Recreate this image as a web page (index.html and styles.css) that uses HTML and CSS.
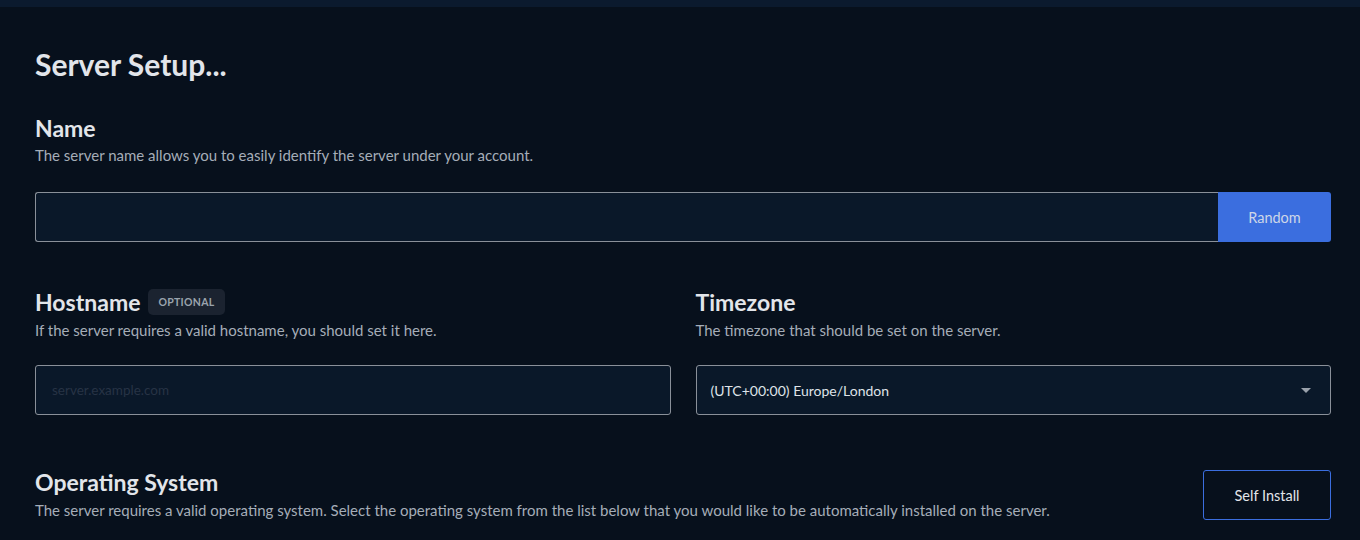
FILE: index.html
```html
<!DOCTYPE html>
<html>
<head>
<meta charset="utf-8">
<link rel="stylesheet" href="styles.css">
</head>
<body>
<div class="topbar"></div>
<main class="page">
  <h1 class="title">Server Setup...</h1>

  <section class="field name-field">
    <h2 class="label">Name</h2>
    <p class="desc">The server name allows you to easily identify the server under your account.</p>
    <div class="input-group">
      <input class="input grow" type="text">
      <button class="btn-primary">Random</button>
    </div>
  </section>

  <div class="two-col">
    <section class="field">
      <h2 class="label">Hostname <span class="badge">OPTIONAL</span></h2>
      <p class="desc">If the server requires a valid hostname, you should set it here.</p>
      <input class="input" type="text" placeholder="server.example.com">
    </section>
    <section class="field">
      <h2 class="label">Timezone</h2>
      <p class="desc">The timezone that should be set on the server.</p>
      <div class="select">
        <span>(UTC+00:00) Europe/London</span>
        <span class="caret"></span>
      </div>
    </section>
  </div>

  <section class="os-row">
    <div>
      <h2 class="label">Operating System</h2>
      <p class="desc">The server requires a valid operating system. Select the operating system from the list below that you would like to be automatically installed on the server.</p>
    </div>
    <button class="btn-outline">Self Install</button>
  </section>
</main>
</body>
</html>
```
FILE: styles.css
```css
* { box-sizing: border-box; }
html, body { margin: 0; padding: 0; }
body {
  background: #07101c;
  color: #e2e5ea;
  font-family: "Lato", "Noto Sans", sans-serif;
  height: 540px;
  overflow: hidden;
}
.topbar {
  height: 7px;
  background: #0b1a2e;
}
.page {
  padding: 0 29px 0 35px;
}
.title {
  margin: 0;
  padding-top: 39px;
  font-size: 30px;
  line-height: 36px;
  font-weight: 700;
  color: #e2e5ea;
}
.name-field { margin-top: 32px; }
.label {
  margin: 0;
  font-size: 23px;
  line-height: 28px;
  font-weight: 700;
  color: #e2e5ea;
  display: flex;
  align-items: center;
  gap: 8px;
}
.two-col .label { min-height: 30px; }
.desc {
  margin: 3px 0 0;
  font-size: 15px;
  line-height: 20px;
  color: #a5adb8;
}
.input-group {
  display: flex;
  margin-top: 27px;
  height: 50px;
}
.input {
  display: block;
  width: 100%;
  height: 50px;
  margin-top: 25px;
  background: #0a1829;
  border: 1px solid #8a9099;
  border-radius: 3px;
  padding: 0 16px;
  color: #e2e5ea;
  font-family: inherit;
  font-size: 13.5px;
  outline: none;
}
.input::placeholder { color: #273345; }
.input-group .input {
  margin-top: 0;
  border-radius: 3px 0 0 3px;
  border-right: 0;
}
.grow { flex: 1; }
.btn-primary {
  width: 113px;
  flex: none;
  background: #3b6edf;
  border: 0;
  border-radius: 0 3px 3px 0;
  color: #cdd6e8;
  font-family: inherit;
  font-size: 14.5px;
}
.two-col {
  display: grid;
  grid-template-columns: 1fr 1fr;
  gap: 25px;
  margin-top: 45px;
}
.badge {
  display: inline-block;
  background: #1b2330;
  color: #9aa3ad;
  font-size: 10.5px;
  font-weight: 700;
  letter-spacing: 0.3px;
  padding: 0 10px;
  line-height: 26px;
  border-radius: 5px;
}
.select {
  margin-top: 25px;
  height: 50px;
  background: #0a1829;
  border: 1px solid #8a9099;
  border-radius: 3px;
  display: flex;
  align-items: center;
  justify-content: space-between;
  padding: 0 19px 0 14px;
  font-size: 14px;
  color: #dfe3e8;
}
.caret {
  width: 0;
  height: 0;
  border-left: 5px solid transparent;
  border-right: 5px solid transparent;
  border-top: 5px solid #9aa1ab;
}
.os-row {
  display: flex;
  justify-content: space-between;
  align-items: flex-start;
  margin-top: 53px;
}
.os-row .desc { margin-top: 4px; }
.btn-outline {
  width: 128px;
  height: 50px;
  flex: none;
  background: transparent;
  border: 1px solid #3b6edf;
  border-radius: 3px;
  color: #e2e5ea;
  font-family: inherit;
  font-size: 14.5px;
  margin-top: 2px;
}
```
